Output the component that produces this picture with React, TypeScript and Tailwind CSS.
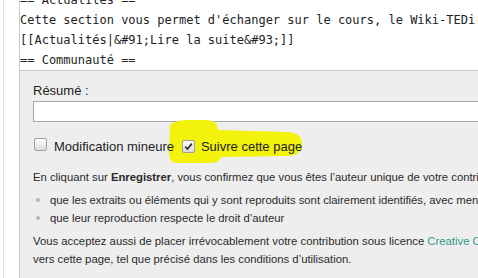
import React from 'react';

const Box = ({ checked }: { checked?: boolean }) => (
  <span className="relative z-10 inline-flex h-[13px] w-[13px] shrink-0 items-center justify-center rounded-[2px] border border-[#a0a0a0] bg-gradient-to-b from-[#fdfdfd] to-[#dcdcdc]">
    {checked && (
      <svg width="9" height="9" viewBox="0 0 9 9">
        <path d="M1.2 4.6 L3.5 7 L7.8 1.6" fill="none" stroke="#333" strokeWidth="1.8" />
      </svg>
    )}
  </span>
);

const wikitext = [
  '== Actualités ==',
  "Cette section vous permet d'échanger sur le cours, le Wiki-TEDi",
  '[[Actualités|&#91;Lire la suite&#93;]]',
  '== Communauté ==',
];

export default function App() {
  return (
    <div className="flex h-[278px] w-[478px] overflow-hidden bg-white">
      <div className="ml-[3px] w-[16px] shrink-0 border-l border-[#e2e2e2]" />
      <div className="flex min-w-0 flex-1 flex-col border-l border-[#c8c8c8]">
        {/* textarea */}
        <div className="h-[71px] shrink-0 overflow-hidden border-b border-[#c8c8c8] bg-white">
          <div className="mt-[-10px] whitespace-pre font-['DejaVu_Sans_Mono',monospace] text-[12px] leading-[20px] text-[#222]">
            {wikitext.map((l, i) => (
              <div key={i}>{l}</div>
            ))}
          </div>
        </div>

        {/* edit options */}
        <div className="flex-1 bg-[#eeeeee] px-[13px] pt-[11px] font-['Liberation_Sans',Arial,sans-serif] text-[#222]">
          <div className="text-[13px] leading-[18px]">Résumé :</div>
          <div className="mt-[1px] h-[21px] w-[600px] border border-[#a8a8a8] bg-white" />

          <div className="relative mt-[15px] flex h-[20px] items-center text-[13px] text-[#222]">
            <svg className="absolute left-[132px] top-[-20px]" width="140" height="48" viewBox="0 0 140 48">
              <path
                d="M5 9 C7 3 18 3 38 3 C49 3 53 6 53 13 L122 15 C133 16 137 20 137 27 C137 35 132 39 121 39 L56 40 C55 45 50 46 40 46 L12 46 C6 46 4 42 4 35 Z"
                fill="#f2f20a"
              />
            </svg>
            <span className="ml-[1px]"><Box /></span>
            <span className="relative z-10 ml-[7px]">Modification mineure</span>
            <span className="ml-[8px]"><Box checked /></span>
            <span className="relative z-10 ml-[6px]">Suivre cette page</span>
          </div>

          <div className="mt-[11px] whitespace-nowrap text-[11.3px] leading-[18px] text-[#2a2a2a]">
            <p>
              En cliquant sur <b>Enregistrer</b>, vous confirmez que vous êtes l’auteur unique de votre contribution
            </p>
            <ul className="mt-[5px]">
              <li className="flex items-center">
                <span className="ml-[3px] mr-[10px] h-[4px] w-[4px] shrink-0 rounded-full bg-[#b5b5b5]" />
                que les extraits ou éléments qui y sont reproduits sont clairement identifiés, avec mention
              </li>
              <li className="flex items-center">
                <span className="ml-[3px] mr-[10px] h-[4px] w-[4px] shrink-0 rounded-full bg-[#b5b5b5]" />
                que leur reproduction respecte le droit d’auteur
              </li>
            </ul>
            <p className="mt-[5px]">
              Vous acceptez aussi de placer irrévocablement votre contribution sous licence{' '}
              <span className="text-[#2f9a88]">Creative Commons</span>
            </p>
            <p>vers cette page, tel que précisé dans les conditions d’utilisation.</p>
          </div>
        </div>
      </div>
    </div>
  );
}
